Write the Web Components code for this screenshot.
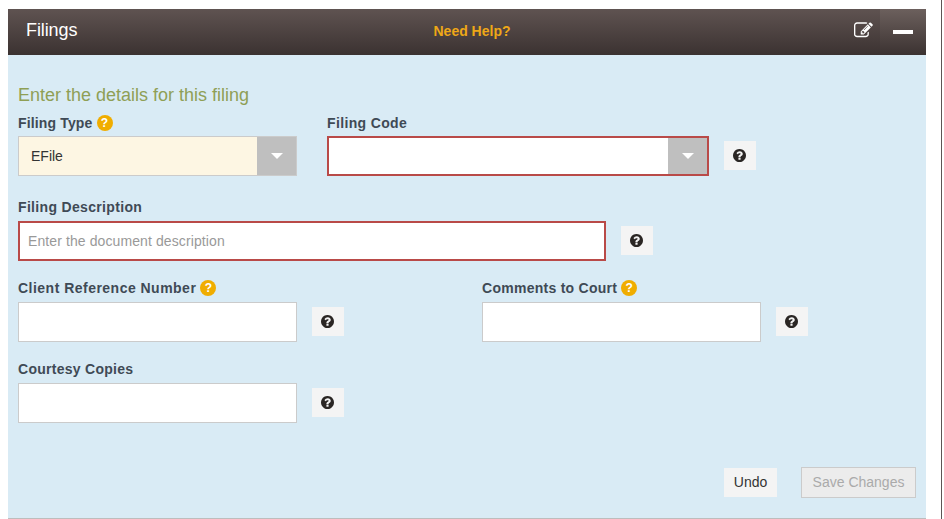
<!DOCTYPE html>
<html>
<head>
<meta charset="utf-8">
<title>Filings</title>
<style>
    html, body { margin: 0; padding: 0; background: #fff; }
    body { font-family: "Liberation Sans", Arial, sans-serif; overflow: hidden; }
</style>
</head>
<body>
<filing-panel>
    <panel-header slot="header" title-text="Filings" help-text="Need Help?"></panel-header>

    <h-line>Enter the details for this filing</h-line>

    <form-row style="margin-top:7px;--label-shift:1px">
        <form-field label="Filing Type" badge width="279px" style="margin-right:30px;--label-spacing:.15px">
            <select-box value="EFile" filled></select-box>
        </form-field>
        <form-field label="Filing Code" width="382px" style="--label-spacing:.36px">
            <select-box invalid></select-box>
        </form-field>
        <help-button></help-button>
    </form-row>

    <form-row style="margin-top:22px">
        <form-field label="Filing Description" width="588px" style="--label-spacing:.33px">
            <text-box invalid placeholder="Enter the document description"></text-box>
        </form-field>
        <help-button></help-button>
    </form-row>

    <form-row style="margin-top:18px">
        <form-field label="Client Reference Number" badge width="279px" style="--label-spacing:.48px">
            <text-box></text-box>
        </form-field>
        <help-button style="margin-right:138px"></help-button>
        <form-field label="Comments to Court" badge width="279px" style="--label-spacing:.27px">
            <text-box></text-box>
        </form-field>
        <help-button></help-button>
    </form-row>

    <form-row style="margin-top:18px">
        <form-field label="Courtesy Copies" width="279px" style="--label-spacing:.27px">
            <text-box></text-box>
        </form-field>
        <help-button></help-button>
    </form-row>

    <form-actions slot="actions"></form-actions>
</filing-panel>

<script>
const questionPath = 'M1024 1376v-192q0-14-9-23t-23-9h-192q-14 0-23 9t-9 23v192q0 14 9 23t23 9h192q14 0 23-9t9-23zm256-672q0-88-55.5-163t-138.5-116-170-41q-243 0-371 213-15 24 8 42l132 100q7 6 19 6 16 0 25-12 53-68 86-92 34-24 86-24 48 0 85.5 26t37.5 59q0 38-20 61t-68 45q-63 28-115.5 86.5t-52.5 125.5v36q0 14 9 23t23 9h192q14 0 23-9t9-23q0-19 21.5-49.5t54.5-49.5q32-18 49-28.5t46-35 44.5-48 28-60.5 12.5-81zm384 192q0 209-103 385.5t-279.5 279.5-385.5 103-385.5-103-279.5-279.5-103-385.5 103-385.5 279.5-279.5 385.5-103 385.5 103 279.5 279.5 103 385.5z';
const editPath = 'M888 1184l116-116-152-152-116 116v56h96v96h56zm440-720q-16-16-33 1l-350 350q-17 17-1 33t33-1l350-350q17-17 1-33zm80 594v190q0 119-84.5 203.5t-203.5 84.5h-832q-119 0-203.5-84.5t-84.5-203.5v-832q0-119 84.5-203.5t203.5-84.5h832q63 0 117 25 15 7 18 23 3 17-9 29l-49 49q-14 14-32 8-23-6-45-6h-832q-66 0-113 47t-47 113v832q0 66 47 113t113 47h832q66 0 113-47t47-113v-126q0-13 9-22l64-64q15-15 35-7t20 29zm-96-738l288 288-672 672h-288v-288zm444 132l-92 92-288-288 92-92q28-28 68-28t68 28l152 152q28 28 28 68t-28 68z';

const filingPanel = document.createElement('template');
filingPanel.innerHTML = `
    <style>
        :host {
            display: block;
            box-sizing: border-box;
            width: 942px;
            height: 519px;
            padding: 9px 0 0 8px;
            border-right: 1px solid #5d5555;
        }
        .panel {
            box-sizing: border-box;
            width: 918px;
            height: 510px;
            display: flex;
            flex-direction: column;
            background: #d9ebf5;
            border-bottom: 1px solid #bdbdbd;
        }
        .body {
            flex: 1;
            display: flex;
            flex-direction: column;
            padding: 0 10px;
        }
        .actions { margin-top: auto; }
    </style>
    <div class="panel">
        <slot name="header"></slot>
        <div class="body">
            <slot></slot>
            <div class="actions"><slot name="actions"></slot></div>
        </div>
    </div>
`;

class FilingPanel extends HTMLElement {
    constructor() {
        super();
        this.attachShadow({ mode: 'open' });
        this.shadowRoot.appendChild(filingPanel.content.cloneNode(true));
    };
};

const panelHeader = document.createElement('template');
panelHeader.innerHTML = `
    <style>
        :host {
            display: grid;
            grid-template-columns: 1fr auto 1fr;
            align-items: center;
            height: 46px;
            padding-left: 18px;
            color: #fff;
            background: linear-gradient(#5f5351, #3b3231);
        }
        .title {
            margin-top: -3px;
            font-size: 18px;
            letter-spacing: -.1px;
        }
        .help {
            margin: -2px 8px 0 0;
            font-size: 14px;
            font-weight: bold;
            color: #eea817;
        }
        .tools {
            display: flex;
            align-items: stretch;
            justify-content: flex-end;
            height: 46px;
        }
        .edit {
            display: flex;
            align-items: center;
            padding-right: 6px;
            margin-top: -5px;
        }
        .min {
            display: flex;
            align-items: center;
            justify-content: center;
            width: 46px;
            background: linear-gradient(#6c605d, #3b3231);
        }
        .min span {
            display: block;
            width: 20px;
            height: 4px;
            background: #fff;
        }
        svg { display: block; fill: #fff; }
    </style>
    <div class="title"></div>
    <div class="help"></div>
    <div class="tools">
        <div class="edit"><svg width="20" height="18" viewBox="0 0 1900 1710"><path d="${editPath}"/></svg></div>
        <div class="min"><span></span></div>
    </div>
`;

class PanelHeader extends HTMLElement {
    constructor() {
        super();
        this.attachShadow({ mode: 'open' });
        this.shadowRoot.appendChild(panelHeader.content.cloneNode(true));
    };

    connectedCallback() {
        this.shadowRoot.querySelector('.title').textContent = this.getAttribute('title-text');
        this.shadowRoot.querySelector('.help').textContent = this.getAttribute('help-text');
    };
};

const headingLine = document.createElement('template');
headingLine.innerHTML = `
    <style>
        :host {
            display: block;
            margin-top: 29px;
            font-size: 18px;
            line-height: 22px;
            color: #8f9f55;
        }
    </style>
    <slot></slot>
`;

class HeadingLine extends HTMLElement {
    constructor() {
        super();
        this.attachShadow({ mode: 'open' });
        this.shadowRoot.appendChild(headingLine.content.cloneNode(true));
    };
};

const formRow = document.createElement('template');
formRow.innerHTML = `
    <style>
        :host {
            display: flex;
            align-items: flex-end;
        }
    </style>
    <slot></slot>
`;

class FormRow extends HTMLElement {
    constructor() {
        super();
        this.attachShadow({ mode: 'open' });
        this.shadowRoot.appendChild(formRow.content.cloneNode(true));
    };
};

const formField = document.createElement('template');
formField.innerHTML = `
    <style>
        :host {
            display: block;
            flex: none;
        }
        .label {
            display: flex;
            align-items: center;
            gap: 4px;
            height: 18px;
            margin-top: var(--label-shift, 0px);
            margin-bottom: calc(5px - var(--label-shift, 0px));
            font-size: 14px;
            font-weight: bold;
            color: #3f4a55;
        }
        .text { letter-spacing: var(--label-spacing, .3px); }
        .badge {
            display: flex;
            align-items: center;
            justify-content: center;
            width: 16px;
            height: 16px;
            border-radius: 50%;
            background: #f0ad00;
            color: #fff;
            font-size: 12px;
        }
    </style>
    <div class="label"><span class="text"></span></div>
    <slot></slot>
`;

class FormField extends HTMLElement {
    constructor() {
        super();
        this.attachShadow({ mode: 'open' });
        this.shadowRoot.appendChild(formField.content.cloneNode(true));
    };

    connectedCallback() {
        this.style.width = this.getAttribute('width');
        this.shadowRoot.querySelector('.text').textContent = this.getAttribute('label');
        if (this.hasAttribute('badge')) {
            const badge = document.createElement('span');
            badge.className = 'badge';
            badge.textContent = '?';
            this.shadowRoot.querySelector('.label').appendChild(badge);
        };
    };
};

const selectBox = document.createElement('template');
selectBox.innerHTML = `
    <style>
        :host {
            display: flex;
            box-sizing: border-box;
            height: 40px;
            border: 1px solid #cbcbcb;
            background: #fff;
            font-size: 14px;
            color: #333;
        }
        :host([invalid]) { border: 2px solid #b94a48; }
        :host([filled]) { background: #fdf6e3; }
        .value {
            flex: 1;
            display: flex;
            align-items: center;
            padding-left: 12px;
        }
        .arrow {
            display: flex;
            align-items: center;
            justify-content: center;
            flex: none;
            width: 39px;
            background: #bfbfbf;
        }
        .arrow::after {
            content: "";
            border-top: 6px solid #fff;
            border-left: 6px solid transparent;
            border-right: 6px solid transparent;
        }
    </style>
    <div class="value"></div>
    <div class="arrow"></div>
`;

class SelectBox extends HTMLElement {
    constructor() {
        super();
        this.attachShadow({ mode: 'open' });
        this.shadowRoot.appendChild(selectBox.content.cloneNode(true));
    };

    connectedCallback() {
        this.shadowRoot.querySelector('.value').textContent = this.getAttribute('value') || '';
    };
};

const textBox = document.createElement('template');
textBox.innerHTML = `
    <style>
        :host {
            display: flex;
            align-items: center;
            box-sizing: border-box;
            height: 40px;
            padding-left: 9px;
            border: 1px solid #cbcbcb;
            background: #fff;
            font-size: 14px;
            letter-spacing: .1px;
            color: #999;
        }
        :host([invalid]) {
            padding-left: 8px;
            border: 2px solid #b94a48;
        }
    </style>
    <span class="placeholder"></span>
`;

class TextBox extends HTMLElement {
    constructor() {
        super();
        this.attachShadow({ mode: 'open' });
        this.shadowRoot.appendChild(textBox.content.cloneNode(true));
    };

    connectedCallback() {
        this.shadowRoot.querySelector('.placeholder').textContent = this.getAttribute('placeholder') || '';
    };
};

const helpButton = document.createElement('template');
helpButton.innerHTML = `
    <style>
        :host {
            display: flex;
            align-items: center;
            justify-content: center;
            flex: none;
            width: 32px;
            height: 29px;
            margin: 0 0 6px 15px;
            background: #f4f4f4;
        }
        svg { display: block; fill: #2a2624; margin-left: -1px; }
    </style>
    <svg width="13" height="13" viewBox="128 128 1536 1536"><path d="${questionPath}"/></svg>
`;

class HelpButton extends HTMLElement {
    constructor() {
        super();
        this.attachShadow({ mode: 'open' });
        this.shadowRoot.appendChild(helpButton.content.cloneNode(true));
    };
};

const formActions = document.createElement('template');
formActions.innerHTML = `
    <style>
        :host {
            display: flex;
            align-items: center;
            justify-content: flex-end;
            gap: 24px;
            padding-bottom: 20px;
            font-size: 14px;
        }
        .undo {
            display: flex;
            align-items: center;
            justify-content: center;
            width: 53px;
            height: 29px;
            padding-bottom: 1px;
            box-sizing: border-box;
            background: #f4f4f4;
            color: #333;
        }
        .save {
            display: flex;
            align-items: center;
            justify-content: center;
            box-sizing: border-box;
            width: 115px;
            height: 31px;
            padding-bottom: 1px;
            border: 1px solid #cbcbcb;
            background: #ececec;
            color: #aaa;
        }
    </style>
    <div class="undo">Undo</div>
    <div class="save">Save Changes</div>
`;

class FormActions extends HTMLElement {
    constructor() {
        super();
        this.attachShadow({ mode: 'open' });
        this.shadowRoot.appendChild(formActions.content.cloneNode(true));
    };
};

window.customElements.define('filing-panel', FilingPanel);
window.customElements.define('panel-header', PanelHeader);
window.customElements.define('h-line', HeadingLine);
window.customElements.define('form-row', FormRow);
window.customElements.define('form-field', FormField);
window.customElements.define('select-box', SelectBox);
window.customElements.define('text-box', TextBox);
window.customElements.define('help-button', HelpButton);
window.customElements.define('form-actions', FormActions);
</script>
</body>
</html>
